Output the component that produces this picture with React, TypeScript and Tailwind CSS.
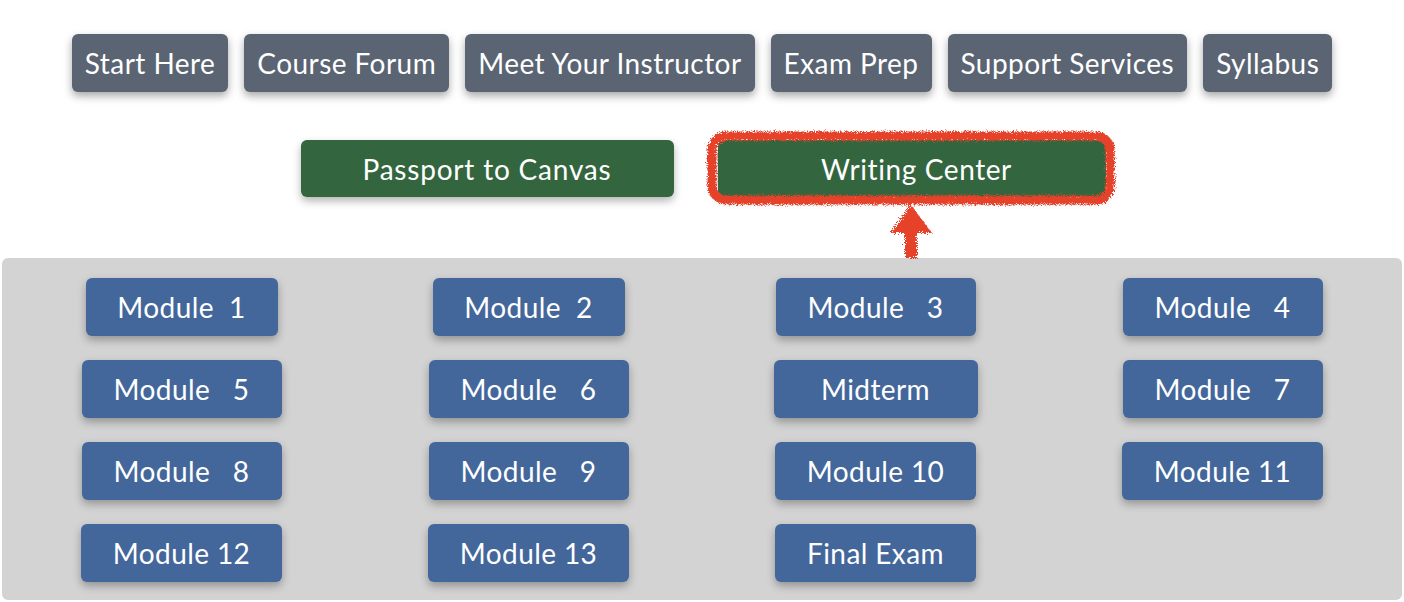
import React from 'react'

const topLinks = ['Start Here', 'Course Forum', 'Meet Your Instructor', 'Exam Prep', 'Support Services', 'Syllabus']

// each row: [label, width]
const moduleRows: [string, string][][] = [
  [['Module  1', 'w-[192px]'], ['Module  2', 'w-[192px]'], ['Module   3', 'w-[200px]'], ['Module   4', 'w-[200px]']],
  [['Module   5', 'w-[200px]'], ['Module   6', 'w-[200px]'], ['Midterm', 'w-[204px]'], ['Module   7', 'w-[200px]']],
  [['Module   8', 'w-[200px]'], ['Module   9', 'w-[200px]'], ['Module 10', 'w-[201px]'], ['Module 11', 'w-[201px]']],
  [['Module 12', 'w-[201px]'], ['Module 13', 'w-[201px]'], ['Final Exam', 'w-[201px]'], ['', '']],
]

function Annotation() {
  return (
    <svg className="absolute left-0 top-0 pointer-events-none" width="1404" height="602">
      <defs>
        <filter id="rough" x="-5%" y="-20%" width="110%" height="140%">
          <feTurbulence type="fractalNoise" baseFrequency="1.1" numOctaves="3" seed="7" result="noise" />
          <feDisplacementMap in="SourceGraphic" in2="noise" scale="7" />
        </filter>
      </defs>
      <g filter="url(#rough)" fill="none" stroke="#e6432b">
        <rect x="712" y="136" width="398" height="64" rx="14" strokeWidth="9" />
      </g>
      <g filter="url(#rough)" fill="#e6432b">
        <path d="M911 205 L932 233 L917 233 L917 258 L905 258 L905 233 L890 233 Z" />
      </g>
    </svg>
  )
}

export default function App() {
  return (
    <div className="relative w-[1404px] h-[602px] bg-white overflow-hidden font-['Lato',sans-serif] text-white">
      <div className="flex justify-center gap-4 pt-[34px]">
        {topLinks.map(label => (
          <div
            key={label}
            className="h-[58px] px-[13px] flex items-center rounded-md bg-[#5a6473] text-[28px] tracking-[0.45px] shadow-[0_4px_8px_rgba(0,0,0,0.35)]"
          >
            {label}
          </div>
        ))}
      </div>

      <div className="flex justify-center gap-[44px] pt-[48px] pl-[2px]">
        <div className="w-[373px] h-[57px] flex items-center justify-center rounded-md bg-[#33663f] text-[28px] tracking-[0.8px] shadow-[0_4px_8px_rgba(0,0,0,0.3)]">
          Passport to Canvas
        </div>
        <div className="w-[388px] h-[57px] flex items-center justify-center pl-[10px] rounded-md bg-[#33663f] text-[28px] tracking-[0.6px] shadow-[0_4px_8px_rgba(0,0,0,0.3)]">
          Writing Center
        </div>
      </div>

      <div className="mx-[2px] mt-[61px] h-[342px] rounded-md bg-[#d3d3d3] px-[6px] pt-[20px] flex flex-col gap-6">
        {moduleRows.map((row, i) => (
          <div key={i} className="grid grid-cols-4">
            {row.map(([label, width], j) => (
              <div key={j} className="flex justify-center">
                {label && (
                  <div
                    className={`${width} h-[58px] flex items-center justify-center whitespace-pre rounded-md bg-[#43679b] text-[28px] tracking-[0.4px] shadow-[0_4px_8px_rgba(0,0,0,0.3)]`}
                  >
                    {label}
                  </div>
                )}
              </div>
            ))}
          </div>
        ))}
      </div>

      <Annotation />
    </div>
  )
}
